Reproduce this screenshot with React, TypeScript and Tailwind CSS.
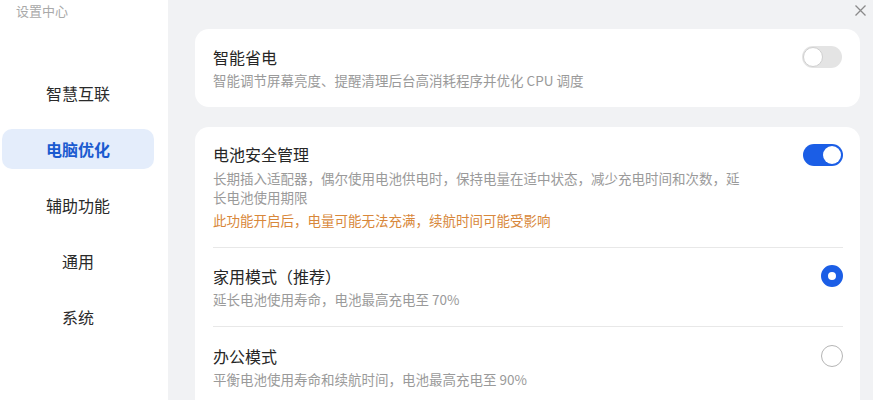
const navItems = ["智慧互联", "电脑优化", "辅助功能", "通用", "系统"];

function Toggle({ on }: { on: boolean }) {
  return on ? (
    <div className="w-[40px] h-[22px] rounded-full bg-[#1b5ee6] flex items-center justify-end pr-[2px]">
      <div className="w-[18px] h-[18px] rounded-full bg-white" />
    </div>
  ) : (
    <div className="w-[40px] h-[22px] rounded-full bg-[#e4e4e4] flex items-center pl-[1px]">
      <div className="w-[20px] h-[20px] rounded-full bg-white border border-[#cfcfcf]" />
    </div>
  );
}

function Radio({ on }: { on: boolean }) {
  return on ? (
    <div className="w-[22px] h-[22px] rounded-full border-[7px] border-[#1b5ee6] bg-white" />
  ) : (
    <div className="w-[22px] h-[22px] rounded-full border border-[#b5b5b5] bg-white" />
  );
}

function App() {
  const font = { fontFamily: '"Noto Sans CJK SC", "Noto Sans", sans-serif' };
  return (
    <div className="w-[873px] h-[400px] flex overflow-hidden bg-[#f1f2f4] relative" style={font}>
      {/* sidebar */}
      <div className="w-[168px] shrink-0 bg-white flex flex-col">
        <div className="pl-[16px] pt-[1px] text-[13px] leading-[20px] text-[#a9a9a9]">设置中心</div>
        <div className="flex flex-col pl-[2px] pr-[14px] mt-[52px] gap-[16px]">
          {navItems.map((n) => (
            <div
              key={n}
              className={
                n === "电脑优化"
                  ? "h-[40px] rounded-[10px] bg-[#e4edfb] flex items-center justify-center text-[16px] font-bold text-[#1b5bd0]"
                  : "h-[40px] flex items-center justify-center text-[16px] text-[#2a2a2a]"
              }
            >
              {n}
            </div>
          ))}
        </div>
      </div>

      {/* main */}
      <div className="flex-1 pl-[27px] pr-[13px] pt-[29px] flex flex-col gap-[20px]">
        <div className="shrink-0 bg-white rounded-[14px] h-[78px] pl-[18px] pr-[18px] flex flex-col justify-center">
          <div className="flex items-center justify-between">
            <div className="text-[16px] leading-[22px] text-[#262626]">智能省电</div>
            <Toggle on={false} />
          </div>
          <div className="text-[13.5px] leading-[20px] text-[#9a9a9a] mt-[2px]">智能调节屏幕亮度、提醒清理后台高消耗程序并优化 CPU 调度</div>
        </div>

        <div className="flex-1 bg-white rounded-t-[14px] pl-[18px] pr-[17px] flex flex-col">
          <div className="flex justify-between pt-[16px] pb-[17px] border-b border-[#e8e8e8]">
            <div className="flex flex-col">
              <div className="text-[16px] leading-[22px] text-[#262626]">电池安全管理</div>
              <div className="text-[13.5px] leading-[19px] text-[#9a9a9a] mt-[4px] w-[532px]">
                长期插入适配器，偶尔使用电池供电时，保持电量在适中状态，减少充电时间和次数，延长电池使用期限
              </div>
              <div className="text-[13.5px] leading-[19px] text-[#d8873a] mt-[4px]">此功能开启后，电量可能无法充满，续航时间可能受影响</div>
            </div>
            <div className="pt-[1px]">
              <Toggle on={true} />
            </div>
          </div>
          <div className="flex flex-col justify-center h-[79px] border-b border-[#e8e8e8]">
            <div className="flex items-center justify-between">
              <div className="text-[16px] leading-[22px] text-[#262626]">家用模式（推荐）</div>
              <Radio on={true} />
            </div>
            <div className="text-[13.5px] leading-[20px] text-[#9a9a9a] mt-[2px]">延长电池使用寿命，电池最高充电至 70%</div>
          </div>
          <div className="flex flex-col justify-center h-[59px] pt-[20px]">
            <div className="flex items-center justify-between">
              <div className="text-[16px] leading-[22px] text-[#262626]">办公模式</div>
              <Radio on={false} />
            </div>
            <div className="text-[13.5px] leading-[20px] text-[#9a9a9a] mt-[2px]">平衡电池使用寿命和续航时间，电池最高充电至 90%</div>
          </div>
        </div>
      </div>

      <svg className="absolute top-[5px] right-[7px]" width="11" height="11" viewBox="0 0 11 11">
        <path d="M0.5 0.5 L10.5 10.5 M10.5 0.5 L0.5 10.5" stroke="#8a8a8a" strokeWidth="1.3" />
      </svg>
    </div>
  );
}

export default App;
